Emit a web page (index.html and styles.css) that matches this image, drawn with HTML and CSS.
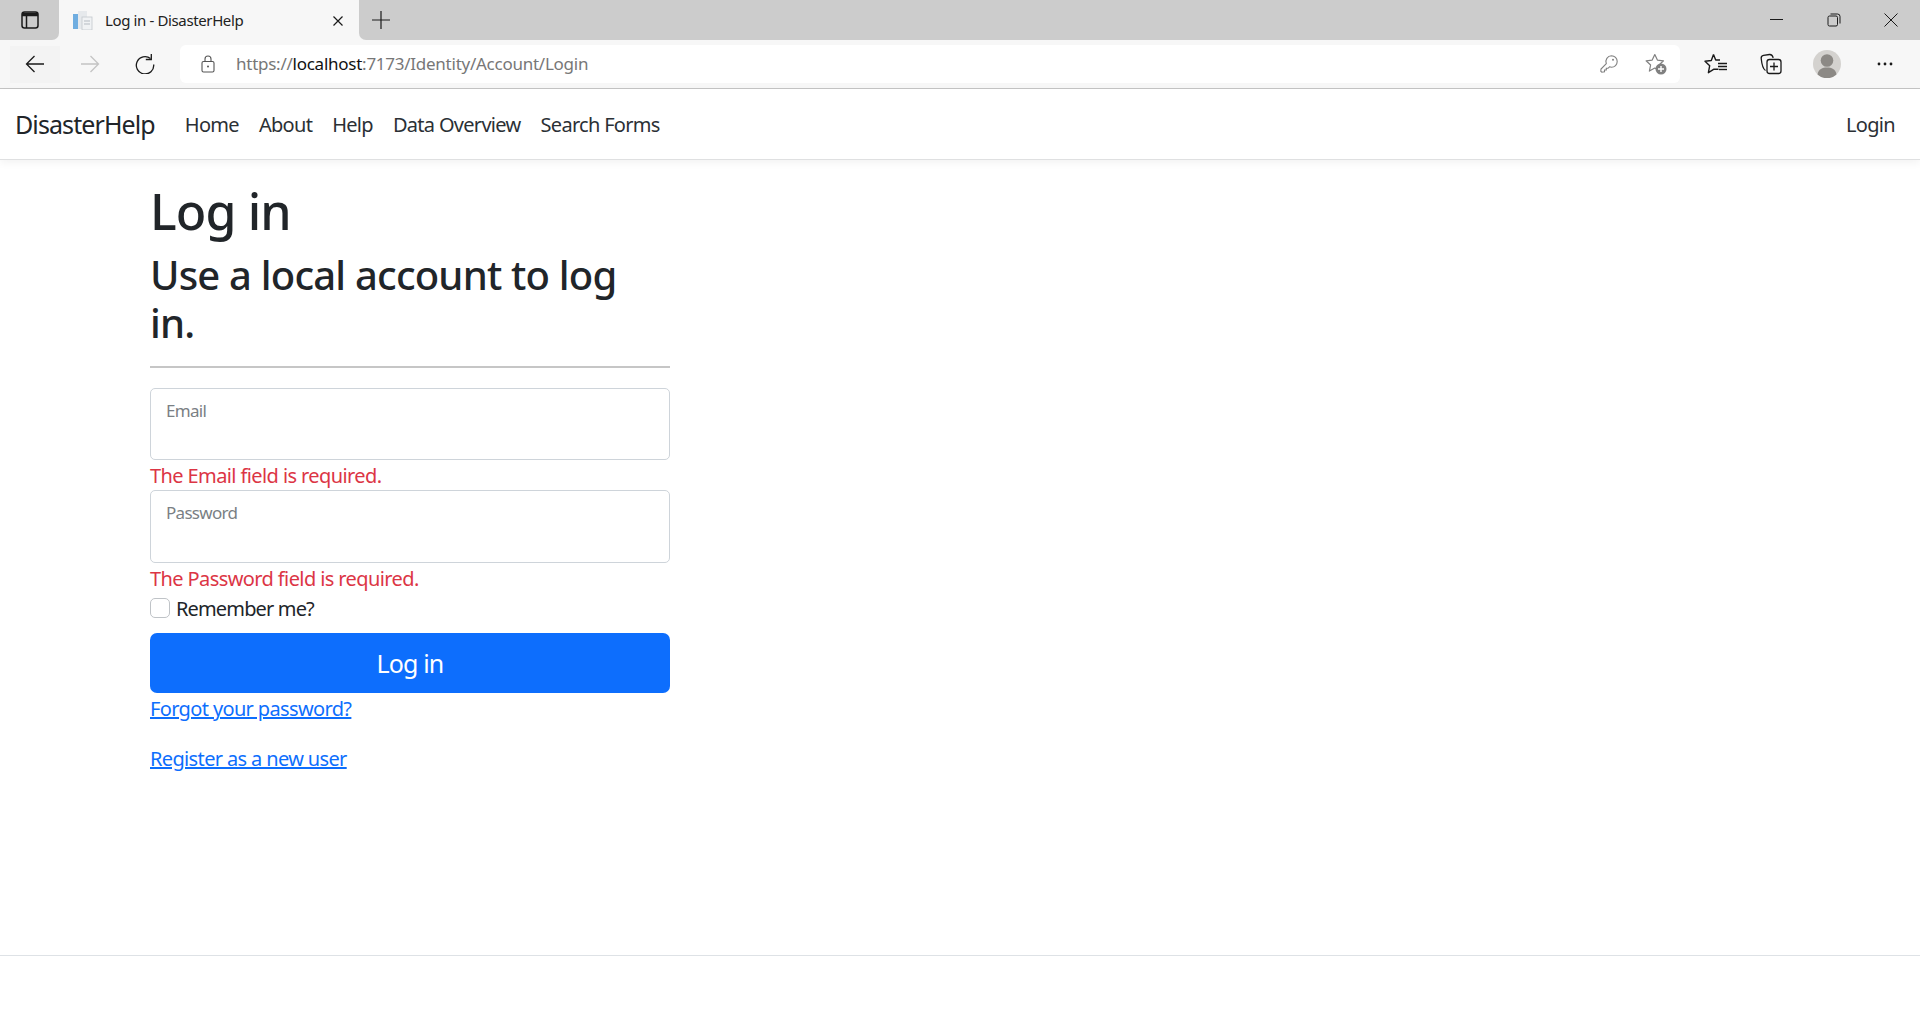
FILE: index.html
```html
<!DOCTYPE html>
<html lang="en">
<head>
<meta charset="utf-8">
<title>Log in - DisasterHelp</title>
<link rel="stylesheet" href="styles.css">
</head>
<body>
<div class="tabstrip">
  <div class="tabside">
    <svg class="ico20" viewBox="0 0 20 20" fill="none" stroke="#1a1a1a" stroke-width="1.5"><rect x="2" y="2" width="16" height="16" rx="2.500"/><path d="M2 4.500h16" stroke-width="3.500"/><path d="M6.500 5v13"/></svg>
  </div>
  <div class="tab">
    <svg class="favicon" viewBox="0 0 20 20"><rect x="0" y="4" width="5" height="15" fill="#6fade0"/><rect x="5" y="1" width="9" height="18" fill="#e6e9ec"/><rect x="9" y="7" width="10" height="13" fill="#f0f2f4" stroke="#c3c8cd" stroke-width=".8"/><path d="M11 11h6M11 14h6" stroke="#b5bbc2"/></svg>
    <span class="tabtitle">Log in - DisasterHelp</span>
    <svg class="tabclose" viewBox="0 0 10 10" stroke="#1a1a1a" stroke-width="1.200"><path d="M.5.500l9 9M9.500.500l-9 9"/></svg>
  </div>
  <div class="striprest">
    <svg class="newtab" viewBox="0 0 18 18" stroke="#1a1a1a" stroke-width="1.200"><path d="M9 0v18M0 9h18"/></svg>
    <div class="winctrls">
      <svg class="winicon" viewBox="0 0 14 14" stroke="#1a1a1a" fill="none"><path d="M0 6.500h13"/></svg>
      <svg class="winicon" viewBox="0 0 14 14" stroke="#1a1a1a" fill="none"><rect x="1" y="3" width="9.500" height="10" rx="1.500"/><path d="M3.500 1h7a2.500 2.500 0 0 1 2.500 2.500v7"/></svg>
      <svg class="winicon" viewBox="0 0 14 14" stroke="#1a1a1a" fill="none"><path d="M.5.500l13 13M13.500.500l-13 13"/></svg>
    </div>
  </div>
</div>
<div class="toolbar">
  <div class="navbtns">
    <div class="backwrap"><svg class="ico20" viewBox="0 0 20 20" fill="none" stroke="#1a1a1a" stroke-width="1.300"><path d="M19 10H1.500M9.500 2L1.500 10l8 8"/></svg></div>
    <svg class="ico20 fwd" viewBox="0 0 20 20" fill="none" stroke="#c4c4c4" stroke-width="1.300"><path d="M1 10h17.500M10.500 2l8 8-8 8"/></svg>
    <svg class="ico20" viewBox="0 0 20 20" fill="none" stroke="#1a1a1a" stroke-width="1.300"><path d="M15.500 4.500A8.700 8.700 0 1 0 18.700 10.500"/><path d="M16.300 0v5.500h-5.500"/></svg>
  </div>
  <div class="addressbar">
    <svg class="lock" viewBox="0 0 14 18" fill="none" stroke="#555" stroke-width="1.100"><rect x="1" y="6.500" width="12" height="10.500" rx="1.500"/><path d="M4 6.500V4a3 3 0 0 1 6 0v2.500"/><circle cx="7" cy="11.500" r="1" fill="#555" stroke="none"/></svg>
    <span class="url"><span class="urlmuted">https://</span><span class="urlhost">localhost</span><span class="urlmuted">:7173/Identity/Account/Login</span></span>
    <svg class="addricon" viewBox="0 0 18 18" fill="none" stroke="#808080" stroke-width="1.100"><path d="M11.500.8a5.700 5.700 0 0 1 0 11.400c-.8 0-1.500-.2-2-.4L8 13.300H6.300V15H4.500v1.700L1.800 17.200l-1-1 .2-2.200 5.300-5.400a5.700 5.700 0 0 1 5.200-7.800z"/><circle cx="13" cy="4.800" r="1" fill="#808080" stroke="none"/></svg>
    <svg class="addricon star" viewBox="0 0 22 22" fill="none" stroke="#808080" stroke-width="1.200" stroke-linejoin="round"><path d="M9.800 1.500l2.600 5.600 6.100.7-4.500 4.200 1.200 6.100-5.400-3-5.400 3 1.200-6.100-4.500-4.200 6.100-.7z"/><circle cx="16" cy="16" r="5.500" fill="#808080" stroke="none"/><path d="M16 13v6M13 16h6" stroke="#fff" stroke-width="1.400"/></svg>
  </div>
  <div class="toolicons">
    <svg class="ico22 fav" viewBox="0 0 26 22" fill="none" stroke="#1a1a1a" stroke-width="1.400" stroke-linejoin="round"><path d="M9.500 1.500L7.300 7.500 1 8.200l4.700 4.500-1.300 7 5.600-3.500h4.500M9.500 1.500l2.200 5.500H16"/><path d="M14 10.500h9M14 13.500h9"/><path d="M15 16.500h8"/></svg>
    <svg class="ico22" viewBox="0 0 22 22" fill="none" stroke="#1a1a1a" stroke-width="1.300"><path d="M5.500 17.500C3 16 2 13.500 1.200 5.500 1 3.500 2 2.500 3.500 2.300L9.500 1.500c2-.2 3 .5 3.700 3.300"/><rect x="7" y="6.500" width="14" height="14" rx="2.500"/><path d="M14 9.500v8M10 13.500h8"/></svg>
    <svg class="avatar" viewBox="0 0 28 28"><circle cx="14" cy="14" r="14" fill="#d4d2cf"/><circle cx="14" cy="10.500" r="6.300" fill="#8c8985"/><path d="M4.500 24.500c1-5.500 5-7 9.500-7s8.500 1.500 9.500 7a14 14 0 0 1-19 0z" fill="#8c8985"/></svg>
    <svg class="dots" viewBox="0 0 16 4" fill="#1a1a1a"><circle cx="2" cy="2" r="1.400"/><circle cx="8" cy="2" r="1.400"/><circle cx="14" cy="2" r="1.400"/></svg>
  </div>
</div>
<header class="navbar">
  <a class="brand">DisasterHelp</a>
  <nav class="navlinks">
    <a class="navlink">Home</a>
    <a class="navlink">About</a>
    <a class="navlink">Help</a>
    <a class="navlink">Data Overview</a>
    <a class="navlink">Search Forms</a>
  </nav>
  <a class="navlink">Login</a>
</header>
<main class="main">
  <section class="col">
    <h1 class="title">Log in</h1>
    <h2 class="subtitle">Use a local account to log in.</h2>
    <hr class="rule">
    <div class="field">Email</div>
    <div class="error">The Email field is required.</div>
    <div class="field">Password</div>
    <div class="error">The Password field is required.</div>
    <label class="remember"><span class="check"></span><span>Remember me?</span></label>
    <button class="submit">Log in</button>
    <p class="linkline"><a class="link">Forgot your password?</a></p>
    <p class="linkline"><a class="link">Register as a new user</a></p>
  </section>
</main>
<footer class="footer"></footer>
</body>
</html>
```
FILE: styles.css
```css
* { box-sizing: border-box; }
html, body { margin: 0; height: 100%; }
body {
  display: flex;
  flex-direction: column;
  height: 1027px;
  overflow: hidden;
  background: #fff;
  color: #212529;
  font-family: "Noto Sans", "Open Sans", sans-serif;
  font-size: 20px;
  letter-spacing: -0.035em;
}
.tabstrip {
  height: 40px;
  flex: none;
  display: flex;
  background: #f7f7f7;
}
.tabside {
  width: 59px;
  padding-left: 20px;
  display: flex;
  align-items: center;
  background: #ccc;
  border-bottom-right-radius: 7px;
}
.ico20 { width: 20px; height: 20px; flex: none; }
.ico22 { width: 22px; height: 22px; flex: none; }
.tab {
  width: 300px;
  height: 40px;
  display: flex;
  align-items: center;
  padding: 0 16px 0 14px;
  background: #f7f7f7;
  border-radius: 8px 8px 0 0;
}
.favicon { width: 20px; height: 20px; flex: none; }
.tabtitle { margin-left: 12px; flex: 1; font-size: 15px; color: #222; letter-spacing: -0.025em; }
.tabclose { width: 10px; height: 10px; margin-top: 1px; }
.striprest {
  flex: 1;
  display: flex;
  align-items: center;
  background: #ccc;
  border-bottom-left-radius: 7px;
}
.newtab { width: 18px; height: 18px; margin-left: 13px; }
.winctrls { margin-left: auto; display: flex; gap: 43px; padding-right: 22px; }
.winicon { width: 14px; height: 14px; }
.toolbar {
  height: 49px;
  flex: none;
  display: flex;
  align-items: center;
  background: #f7f7f7;
  border-bottom: 1px solid #c4c4c4;
}
.navbtns { width: 180px; padding-left: 10px; display: flex; align-items: center; }
.backwrap {
  width: 50px;
  height: 37px;
  display: flex;
  align-items: center;
  justify-content: center;
  background: #f3f3f3;
}
.fwd { margin: 0 35px 0 20px; }
.addressbar {
  width: 1500px;
  height: 38px;
  display: flex;
  align-items: center;
  margin-bottom: 1px;
  padding-left: 21px;
  background: #fff;
  border-radius: 6px;
}
.lock { width: 14px; height: 18px; flex: none; }
.url { margin-left: 21px; font-size: 17px; flex: 1; letter-spacing: -0.015em; }
.urlmuted { color: #777; }
.urlhost { color: #111; }
.addricon { width: 18px; height: 18px; margin-right: 27px; }
.star { width: 22px; height: 22px; margin-right: 13px; }
.toolicons { flex: 1; display: flex; align-items: center; padding-left: 24px; gap: 34px; }
.fav { width: 26px; margin-right: -4px; }
.avatar { width: 28px; height: 28px; margin-left: -3px; }
.dots { width: 16px; height: 4px; margin-left: 2px; }
.navbar {
  height: 71px;
  flex: none;
  display: flex;
  align-items: center;
  padding: 0 15px;
  background: #fff;
  border-bottom: 1px solid #dfe0e1;
  box-shadow: 0 3px 8px rgba(0, 0, 0, .05);
}
.brand { font-size: 25px; margin-right: 20px; color: #212529; letter-spacing: -0.036em; }
.navlinks { display: flex; flex: 1; }
.navlink { padding: 0 10px; color: #2b3035; letter-spacing: -0.035em; }
.main { flex: 1; padding: 21px 0 0 150px; }
.col { width: 520px; }
.title { margin: 0 0 10px; font-size: 50px; font-weight: 500; line-height: 60px; letter-spacing: -0.018em; }
.subtitle { margin: 0 0 19px; font-size: 40px; font-weight: 500; line-height: 48px; letter-spacing: -0.02em; }
.rule { margin: 0 0 20px; height: 2px; border: 0; background: #c6c6c6; }
.field {
  height: 72.250px;
  padding: 10px 15px 0;
  border: 1px solid #ced4da;
  border-radius: 5px;
  font-size: 17px;
  line-height: 24px;
  color: #7a7f84;
}
.error { height: 30px; line-height: 31px; color: #dc3545; letter-spacing: -0.03em; }
.remember { display: flex; align-items: center; height: 31px; letter-spacing: -0.0425em; }
.check {
  width: 20px;
  height: 20px;
  margin-right: 6px;
  border: 1px solid #bfc3c7;
  border-radius: 5px;
  background: #fff;
}
.submit {
  display: block;
  width: 100%;
  height: 60px;
  margin-top: 9.500px;
  border: 0;
  border-radius: 7px;
  background: #0d6efd;
  color: #fff;
  font: inherit;
  font-size: 25px;
  letter-spacing: -0.035em;
}
.linkline { height: 30px; margin: 0 0 20px; line-height: 32px; letter-spacing: -0.032em; }
.link { color: #0d6efd; text-decoration: underline; }
.footer { height: 72px; flex: none; border-top: 1px solid #dee2e6; }
```
